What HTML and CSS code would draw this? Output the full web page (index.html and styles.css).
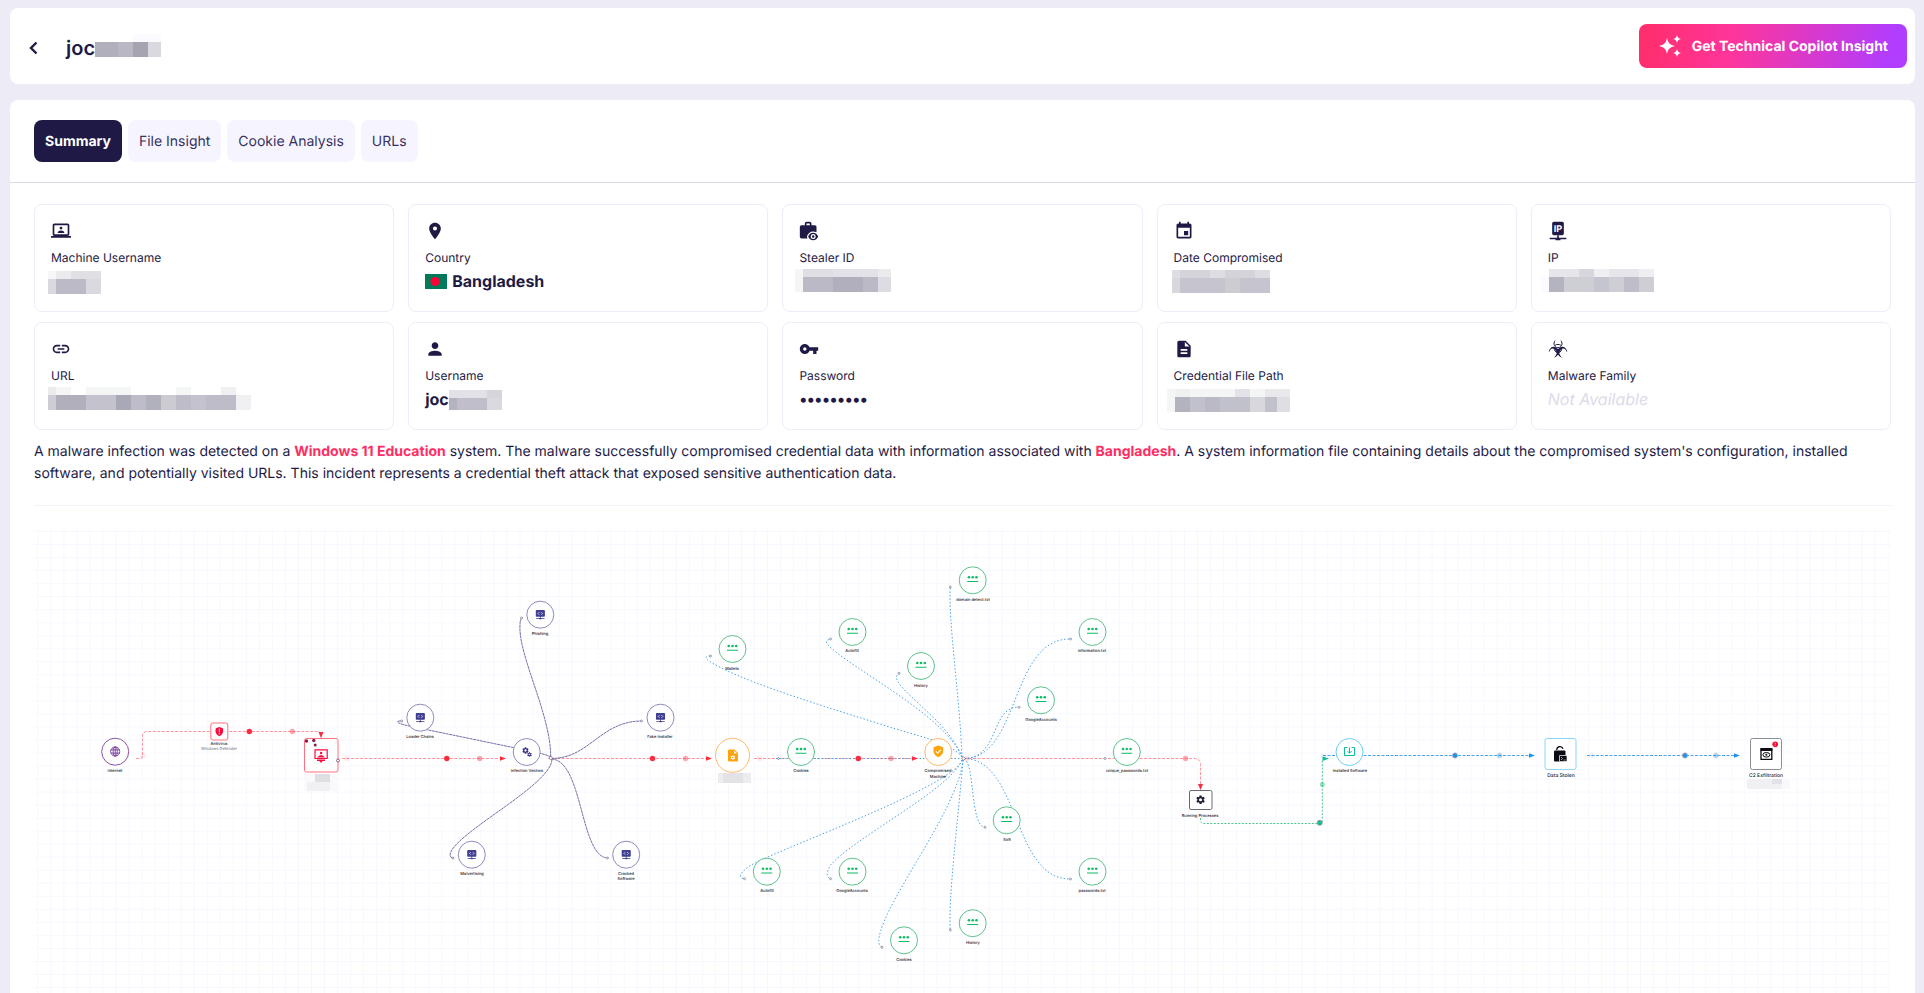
FILE: index.html
```html
<!DOCTYPE html>
<html lang="en">

<head>
  <meta charset="UTF-8">
  <meta name="viewport" content="width=device-width, initial-scale=1.0">
  <title>Technical Insight</title>
  <link rel="stylesheet" href="styles.css">
</head>

<body>

  <!-- shared icons -->
  <svg class="sprite" aria-hidden="true">
    <symbol id="i-laptop" viewBox="0 0 24 24">
      <path d="M20 18c1.1 0 2-.9 2-2V5c0-1.1-.9-2-2-2H4c-1.1 0-2 .9-2 2v11c0 1.1.9 2 2 2H0v2h24v-2zM4 5h16v11H4z" />
      <circle cx="12" cy="8.500" r="1.700" />
      <path d="M8 14.500c0-2 2-3 4-3s4 1 4 3z" />
    </symbol>
    <symbol id="i-pin" viewBox="0 0 24 24">
      <path d="M12 2C8.130 2 5 5.130 5 9c0 5.250 7 13 7 13s7-7.750 7-13c0-3.870-3.130-7-7-7zm0 9.500A2.500 2.500 0 1 1 12 6.500a2.500 2.500 0 0 1 0 5z" />
    </symbol>
    <symbol id="i-bag" viewBox="0 0 24 24">
      <path fill-rule="evenodd" d="M9 1h4a2 2 0 0 1 2 2v2h4a2 2 0 0 1 2 2v6.500c-1.200-.7-2.500-1-4-1-3.800 0-6.500 2.500-7.500 6l.6 2.500H3a2 2 0 0 1-2-2V7a2 2 0 0 1 2-2h4V3a2 2 0 0 1 2-2zm0 4h4V3H9z" />
      <path fill-rule="evenodd" d="M17 14c-2.800 0-5 1.800-6 4.500 1 2.700 3.200 4.500 6 4.500s5-1.800 6-4.500c-1-2.700-3.200-4.500-6-4.500zm0 7.500a3 3 0 1 1 0-6 3 3 0 0 1 0 6z" />
      <circle cx="17" cy="18.500" r="1.500" />
    </symbol>
    <symbol id="i-event" viewBox="0 0 24 24">
      <path d="M17 12h-5v5h5v-5zM16 1v2H8V1H6v2H5c-1.110 0-2 .9-2 2v14c0 1.100.89 2 2 2h14c1.100 0 2-.9 2-2V5c0-1.100-.9-2-2-2h-1V1h-2zm3 18H5V8h14v11z" />
    </symbol>
    <symbol id="i-link" viewBox="0 0 24 24">
      <path d="M3.900 12c0-1.710 1.390-3.100 3.100-3.100h4V7H7c-2.760 0-5 2.240-5 5s2.240 5 5 5h4v-1.900H7c-1.710 0-3.100-1.390-3.100-3.100zM8 13h8v-2H8v2zm9-6h-4v1.900h4c1.710 0 3.100 1.390 3.100 3.100s-1.390 3.100-3.100 3.100h-4V17h4c2.760 0 5-2.240 5-5s-2.240-5-5-5z" />
    </symbol>
    <symbol id="i-user" viewBox="0 0 24 24">
      <path d="M12 12c2.210 0 4-1.790 4-4s-1.790-4-4-4-4 1.790-4 4 1.790 4 4 4zm0 2c-2.670 0-8 1.340-8 4v2h16v-2c0-2.660-5.330-4-8-4z" />
    </symbol>
    <symbol id="i-key" viewBox="0 0 24 24">
      <path d="M12.650 10C11.830 7.670 9.610 6 7 6c-3.310 0-6 2.690-6 6s2.690 6 6 6c2.610 0 4.830-1.670 5.650-4H17v4h4v-4h2v-4H12.650zM7 14c-1.100 0-2-.9-2-2s.9-2 2-2 2 .9 2 2-.9 2-2 2z" />
    </symbol>
    <symbol id="i-doc" viewBox="0 0 24 24">
      <path d="M14 2H6c-1.100 0-2 .9-2 2v16c0 1.100.89 2 2 2h12c1.100 0 2-.9 2-2V8l-6-6zm2 16H8v-2h8v2zm0-4H8v-2h8v2zm-3-5V3.500L18.500 9H13z" />
    </symbol>
    <symbol id="i-bio" viewBox="0 0 24 24">
      <g fill="none" stroke="currentColor" stroke-width="1.200">
        <path d="M8.500 2C5.500 5.500 8 10.500 12 10.500S18.500 5.500 15.500 2" />
        <path d="M1.500 15C2.500 10.500 6.500 9 9.200 11s3 7.500-1.200 11" />
        <path d="M22.500 15c-1-4.500-5-6-7.700-4s-3 7.500 1.200 11" />
        <path d="M7.500 9.500C7 13.500 9 16.500 12 16.500s5-3 4.500-7" />
        <path d="M8.500 7.500c2-1.300 5-1.300 7 0" />
      </g>
      <path d="M2 13c2-4 5.500-4.500 7.500-2.500L12 12l2.500-1.500C16.500 8.500 20 9 22 13c-2.500-2.500-5.500-2-7 .5L13 17l2 5-3-3-3 3 2-5-2-3.500c-1.500-2.500-4.500-3-7-.5z" />
    </symbol>
    <symbol id="i-globe" viewBox="0 0 24 24">
      <g fill="none" stroke="currentColor" stroke-width="1.800">
        <circle cx="12" cy="12" r="10" />
        <ellipse cx="12" cy="12" rx="4.500" ry="10" />
        <path d="M2.500 8.500h19M2.500 15.500h19M12 2v20" />
      </g>
    </symbol>
    <symbol id="i-screen" viewBox="0 0 24 24">
      <path d="M3 1h18a2 2 0 0 1 2 2v12a2 2 0 0 1-2 2h-8v3h9v2h-7v1H9v-1H2v-2h9v-3H3a2 2 0 0 1-2-2V3a2 2 0 0 1 2-2z" />
      <path d="M9.500 6L6.500 9l3 3M14.500 6l3 3-3 3" fill="none" stroke="#fff" stroke-width="1.800" />
    </symbol>
    <symbol id="i-dots" viewBox="0 0 24 24">
      <circle cx="4.500" cy="8" r="2.600" />
      <circle cx="12" cy="8" r="2.600" />
      <circle cx="19.500" cy="8" r="2.600" />
      <path d="M1 15.500h22v2H1z" />
    </symbol>
    <symbol id="i-gear" viewBox="0 0 24 24">
      <path fill-rule="evenodd" d="M9.500 1h5l.6 3.300 1.900 1.100L20.200 4.200l2.500 4.300-2.600 2.200v2.600l2.600 2.200-2.500 4.300-3.200-1.200-1.900 1.100-.6 3.300h-5l-.6-3.300L7 18.600l-3.200 1.200-2.500-4.300 2.600-2.200v-2.600L1.300 8.500l2.500-4.300L7 5.400l1.900-1.100zM12 8a4 4 0 1 0 0 8 4 4 0 0 0 0-8z" />
    </symbol>
    <!-- small node with three dots used for every stolen file -->
    <symbol id="file-node" viewBox="-14 -14 28 28" overflow="visible">
      <circle r="13.500" fill="#fff" stroke="#5cc28b" />
      <use href="#i-dots" x="-6" y="-7" width="12" height="12" fill="#0dbd66" />
    </symbol>
    <symbol id="vector-node" viewBox="-14 -14 28 28" overflow="visible">
      <circle r="13.500" fill="#fff" stroke="#8f8bbd" />
      <use href="#i-screen" x="-5" y="-5" width="10" height="10" fill="#413f91" />
    </symbol>
  </svg>

  <header class="topbar">
    <button class="back" type="button" aria-label="Back">
      <svg width="12" height="16" viewBox="0 0 12 16"><path d="M9.500 2.500L4 8l5.500 5.500" fill="none" stroke="currentColor" stroke-width="2.400" /></svg>
    </button>
    <h1>joc<svg class="redact" width="67" height="23" viewBox="0 0 67 23" aria-hidden="true">
        <path fill="#fafaff" d="M38 0h28v8H38z" />
        <path fill="#b2afbd" d="M0 8h23v15H0z" />
        <path fill="#bab7c5" d="M23 8h15v15H23z" />
        <path fill="#a5a4b0" d="M38 8h15v15H38z" />
        <path fill="#d9d9df" d="M53 8h13v15H53z" />
      </svg></h1>
    <button class="copilot" type="button">
      <svg width="24" height="24" viewBox="0 0 24 24" fill="currentColor">
        <path d="M9 4c1 5 3 7 8 8-5 1-7 3-8 8-1-5-3-7-8-8 5-1 7-3 8-8z" />
        <path d="M19 1c.5 2.500 1.500 3.500 4 4-2.500.5-3.500 1.500-4 4-.5-2.500-1.500-3.500-4-4 2.500-.5 3.500-1.500 4-4zM19 15c.5 2.500 1.500 3.500 4 4-2.500.5-3.500 1.500-4 4-.5-2.500-1.500-3.500-4-4 2.500-.5 3.500-1.500 4-4z" />
      </svg>
      Get Technical Copilot Insight
    </button>
  </header>

  <main class="panel">
    <nav class="tabs">
      <button class="tab active" type="button">Summary</button>
      <button class="tab" type="button">File Insight</button>
      <button class="tab" type="button">Cookie Analysis</button>
      <button class="tab" type="button">URLs</button>
    </nav>

    <div class="content">
      <section class="cards">
        <div class="card">
          <svg class="icon"><use href="#i-laptop" /></svg>
          <div class="label">Machine Username</div>
          <div class="value">
            <svg class="mask" width="80" height="26" aria-hidden="true">
              <path fill="#f7f7f9" d="M5 3h8v8H5z" /><path fill="#ebebee" d="M13 3h15v8H13z" /><path fill="#dfdfe4" d="M28 3h30v8H28z" />
              <path fill="#d9d9df" d="M5 11h8v15H5zM43 11h15v15H43z" /><path fill="#bcbac6" d="M13 11h30v15H13z" />
            </svg>
          </div>
        </div>
        <div class="card">
          <svg class="icon"><use href="#i-pin" /></svg>
          <div class="label">Country</div>
          <div class="value">
            <svg class="flag" width="22" height="15" aria-hidden="true"><path fill="#007a5a" d="M0 0h22v15H0z" /><circle cx="10" cy="7.500" r="4.600" fill="#ff0037" /></svg>
            Bangladesh
          </div>
        </div>
        <div class="card">
          <svg class="icon"><use href="#i-bag" /></svg>
          <div class="label">Stealer ID</div>
          <div class="value">
            <svg class="mask" width="110" height="26" aria-hidden="true">
              <path fill="#f4f6f6" d="M4 1h8v23H4z" /><path fill="#dfdee3" d="M12 1h30v8H12z" /><path fill="#e3e2e8" d="M42 1h45v8H42z" /><path fill="#ebebed" d="M87 1h13v8H87z" />
              <path fill="#bbb9c5" d="M12 9h75v15H12z" /><path fill="#b1afbd" d="M42 9h30v15H42z" /><path fill="#dddce2" d="M87 9h13v15H87z" />
            </svg>
          </div>
        </div>
        <div class="card">
          <svg class="icon"><use href="#i-event" /></svg>
          <div class="label">Date Compromised</div>
          <div class="value">
            <svg class="mask" width="110" height="26" aria-hidden="true">
              <path fill="#dedde3" d="M6 2h98v8H6z" /><path fill="#d4d3d9" d="M14 2h30v8H14zM59 2h30v8H59z" />
              <path fill="#d7d7dc" d="M6 10h8v15H6z" /><path fill="#c5c4cf" d="M14 10h90v15H14z" /><path fill="#ccccd1" d="M59 10h15v15H59z" />
            </svg>
          </div>
        </div>
        <div class="card">
          <svg class="icon" viewBox="0 0 24 24">
            <rect x="5" y="1" width="14" height="16" rx="2" />
            <path d="M11 17h2v3h9v2h-7v1H9v-1H2v-2h9z" />
            <text class="ip-text" x="12" y="13" text-anchor="middle">IP</text>
          </svg>
          <div class="label">IP</div>
          <div class="value">
            <svg class="mask" width="120" height="26" aria-hidden="true">
              <path fill="#fafaff" d="M1 9h8v15H1z" /><path fill="#e6e6ea" d="M9 1h105v8H9z" /><path fill="#d7d6dc" d="M39 1h15v8H39z" /><path fill="#efeff1" d="M54 1h15v8H54zM99 1h15v8H99z" />
              <path fill="#cecfd5" d="M9 9h105v15H9z" /><path fill="#b4b4c0" d="M9 9h15v15H9z" /><path fill="#c5c5d0" d="M54 9h15v15H54z" /><path fill="#bfbdc9" d="M84 9h15v15H84z" />
            </svg>
          </div>
        </div>
        <div class="card">
          <svg class="icon"><use href="#i-link" /></svg>
          <div class="label">URL</div>
          <div class="value">
            <svg class="mask" width="212" height="26" aria-hidden="true">
              <path fill="#ebebee" d="M5 1h8v8H5z" /><path fill="#f4f6f6" d="M13 1h15v8H13zM43 1h45v8H43zM133 1h15v8H133z" /><path fill="#f0f0f3" d="M178 1h15v8H178z" />
              <path fill="#cecdd5" d="M5 9h8v15H5z" /><path fill="#b1afbc" d="M13 9h30v15H13z" /><path fill="#c3c2cd" d="M43 9h30v15H43zM148 9h15v15H148z" /><path fill="#a9a8b6" d="M73 9h15v15H73z" />
              <path fill="#bdbcc8" d="M88 9h15v15H88zM133 9h15v15H133zM163 9h30v15H163z" /><path fill="#b1b0bd" d="M103 9h15v15H103z" /><path fill="#cccbd1" d="M118 9h15v15H118z" /><path fill="#f0f0f3" d="M193 9h15v15H193z" />
            </svg>
          </div>
        </div>
        <div class="card">
          <svg class="icon"><use href="#i-user" /></svg>
          <div class="label">Username</div>
          <div class="value">joc<svg width="54" height="26" aria-hidden="true">
              <path fill="#e2e1e8" d="M0 4h38v8H0z" /><path fill="#d6d5dc" d="M38 4h15v8H38z" />
              <path fill="#b3b2be" d="M0 12h8v12H0z" /><path fill="#bfbeca" d="M8 12h30v12H8z" /><path fill="#d9d9df" d="M38 12h15v12H38z" />
            </svg></div>
        </div>
        <div class="card">
          <svg class="icon"><use href="#i-key" /></svg>
          <div class="label">Password</div>
          <div class="value">•••••••••</div>
        </div>
        <div class="card">
          <svg class="icon"><use href="#i-doc" /></svg>
          <div class="label">Credential File Path</div>
          <div class="value">
            <svg class="mask" width="130" height="26" aria-hidden="true">
              <path fill="#f4f6f6" d="M1 3h8v23H1zM24 3h90v8H24z" /><path fill="#f0f0f3" d="M9 3h15v8H9z" /><path fill="#e2e2e8" d="M69 3h15v8H69z" /><path fill="#e9e9ec" d="M99 3h25v8H99z" />
              <path fill="#c1c1cb" d="M9 11h102v15H9z" /><path fill="#b3b3bf" d="M9 11h15v15H9z" /><path fill="#bbb9c6" d="M39 11h15v15H39z" /><path fill="#d8d7dd" d="M84 11h15v15H84z" /><path fill="#dedee3" d="M111 11h13v15H111z" />
            </svg>
          </div>
        </div>
        <div class="card">
          <svg class="icon"><use href="#i-bio" /></svg>
          <div class="label">Malware Family</div>
          <div class="value empty">Not Available</div>
        </div>
      </section>

      <p class="summary">A malware infection was detected on a <strong>Windows 11 Education</strong> system. The malware
        successfully compromised credential data with information associated with <strong>Bangladesh</strong>. A system
        information file containing details about the compromised system's configuration, installed software, and
        potentially visited URLs. This incident represents a credential theft attack that exposed sensitive
        authentication data.</p>

      <!-- attack flow -->
      <svg class="flow" viewBox="34 529 1857 464" role="img" aria-label="Attack flow">
        <defs>
          <pattern id="grid" x="37.400" y="531" width="13.030" height="13.030" patternUnits="userSpaceOnUse">
            <path d="M.5 0v13.030M0 .5h13.030" stroke="#f7f8ff" fill="none" />
          </pattern>
        </defs>
        <rect x="34" y="529" width="1857" height="464" fill="url(#grid)" />

        <g class="edge red">
          <path d="M136 758.500h4q2.500 0 2.500-3v-19q0-5 5-5H318q3 0 3 3v3" />
          <path d="M342 758.500H502M548 758.500H708M754 758.500H914M964 758.500H1194q6.500 0 6.500 6v20" />
        </g>
        <g class="edge purple">
          <path d="M550.700 757C551 715 518 655 520 625q0-7 3-7" />
          <path d="M551 757C545 754 540 753.500 530 751L409 726C400 724 395 722 399 721h4" />
          <path d="M551 758.500C590 758.500 600 721 642 721" />
          <path d="M552 759C552 784 462 829 450.700 852q-2 6 3 6" />
          <path d="M551 759C583 759 580 858 608 858" />
        </g>
        <g class="edge blue dotted">
          <path d="M776 758.500H964" />
          <path d="M962 757C960 700 948 620 950.300 587" />
          <path d="M962 757C950 742 920 737 880 724 800 699 735 678 709 661q-7-5 2-5" />
          <path d="M962 757C945 715 850 668 828 645q-4-5 3-6" />
          <path d="M962 757C950 725 910 700 898 682q-4-7 2-8.500" />
          <path d="M964 758.500C1020 758.500 1010 639 1070 639" />
          <path d="M964 758.500C1000 758 990 707 1019 707" />
          <path d="M964 759C975 762 970 827 985 827" />
          <path d="M964 758.500C1020 759 1012 879 1070 879" />
          <path d="M962 760C955 785 790 845 755 863 740 871 737 878 744 878.500" />
          <path d="M962 760C950 790 850 840 830 866q-6 11 1 12.500" />
          <path d="M963 760C958 810 885 900 879 938q-1 9 4 9" />
          <path d="M963 760C958 820 948 900 950.300 930" />
        </g>
        <g class="edge blue">
          <path d="M1323 755.500H1530M1587 755.500H1736" />
        </g>
        <g class="edge green">
          <path d="M1200.500 818v2q0 3.500 3 3.500H1319q3.300 0 3.300-3V762q0-3 3-3" />
        </g>

        <!-- arrow heads -->
        <g fill="#ff2a40">
          <path d="M318.500 732h5l-2.500 6zM500 756.200l6 2.300-6 2.300zM706 756.200l6 2.300-6 2.300zM912 756.200l6 2.300-6 2.300zM1198 784h5l-2.500 6z" />
        </g>
        <path fill="#0dbd98" d="M1322.500 756.500l6.500 2-6.500 2.500z" />
        <path fill="#1c94ea" d="M1529 753.200l6 2.300-6 2.300zM1734 753.200l6 2.300-6 2.300z" />

        <!-- moving dots -->
        <g fill="#ff2a40">
          <circle cx="249.300" cy="731.500" r="2.700" />
          <circle cx="446.800" cy="758.500" r="2.700" />
          <circle cx="652.500" cy="758.500" r="2.700" />
          <circle cx="858.300" cy="758.500" r="2.700" />
          <g opacity=".4">
            <circle cx="292.300" cy="731.500" r="2.700" />
            <circle cx="479.700" cy="758.500" r="2.700" />
            <circle cx="685.500" cy="758.500" r="2.700" />
            <circle cx="891" cy="758.500" r="2.700" />
            <circle cx="1185.500" cy="758.500" r="2.700" />
          </g>
          <g opacity=".1">
            <circle cx="143" cy="756" r="2.700" />
            <circle cx="347" cy="758.500" r="2.700" />
            <circle cx="759.500" cy="758.500" r="2.700" />
            <circle cx="967" cy="758.500" r="2.700" />
          </g>
        </g>
        <g fill="#1c94ea" stroke="#ffb3b3" stroke-width=".6">
          <circle cx="1455" cy="755.500" r="2.700" />
          <circle cx="1685" cy="755.500" r="2.700" />
          <g opacity=".4">
            <circle cx="1499.500" cy="755.500" r="2.700" />
            <circle cx="1716" cy="755.500" r="2.700" />
          </g>
          <g opacity=".1">
            <circle cx="1323" cy="756" r="2.700" />
            <circle cx="1592" cy="755.500" r="2.700" />
          </g>
        </g>
        <circle cx="1319.700" cy="822.800" r="2.700" fill="#0dbd98" stroke="#ff8a8a" stroke-width=".5" />
        <circle cx="1322.300" cy="784.500" r="2.500" fill="#0dbd66" opacity=".45" />

        <!-- handles -->
        <g class="handles">
          <circle cx="521.500" cy="618" r="1" /><circle cx="401.500" cy="721" r="1" /><circle cx="641.500" cy="721" r="1" />
          <circle cx="453" cy="858" r="1" /><circle cx="607.500" cy="858" r="1" /><circle cx="550.800" cy="758" r="1.600" />
          <circle cx="710.500" cy="656" r="1" /><circle cx="830.500" cy="639" r="1" /><circle cx="899" cy="673.300" r="1" />
          <circle cx="950.300" cy="587" r="1" /><circle cx="1070.500" cy="639" r="1" /><circle cx="1019" cy="707.300" r="1" />
          <circle cx="985" cy="827.300" r="1" /><circle cx="1070.500" cy="879" r="1" /><circle cx="744.500" cy="878.700" r="1" />
          <circle cx="830.500" cy="878.700" r="1" /><circle cx="882" cy="947.300" r="1" /><circle cx="950.300" cy="930" r="1" />
          <circle cx="778.500" cy="758.500" r="1" /><circle cx="1105" cy="758.500" r="1" /><circle cx="963.500" cy="758.500" r="1.600" />
        </g>

        <!-- entry nodes -->
        <circle cx="115.200" cy="751.700" r="13.500" fill="#fff" stroke="#8a55a8" />
        <use href="#i-globe" x="109.700" y="746" width="11" height="11" color="#6b2a94" />
        <rect x="210.800" y="723" width="17" height="17" rx="2" fill="#fff" stroke="#ff7080" />
        <path fill="#ff0a3c" d="M219.300 727l3.500 1.300c.8 3.500.3 6-3.500 8-3.800-2-4.300-4.500-3.500-8z" />
        <path stroke="#fff" stroke-width=".8" d="M219.300 728.500v3.800M219.300 733.200v1.200" />
        <rect x="304.500" y="738.500" width="33.500" height="33.500" rx="2" fill="#fff" stroke="#ff7080" />
        <path fill="none" stroke="#ff0a3c" stroke-width="1.200" d="M315 749.800h12.200v8.700H315z" />
        <path fill="#ff0a3c" d="M317 757.500q4-5 8 0zM317 759.500h8v1.500h-2.500l-1.500 2-1.500-2H317z" />
        <circle cx="321.100" cy="753" r="1.300" fill="#ff0a3c" />
        <g fill="#7d2148">
          <circle cx="306.500" cy="741" r="1.700" /><circle cx="313.800" cy="740.500" r="1.700" /><circle cx="315.200" cy="745" r="1.500" />
        </g>
        <circle cx="338" cy="760.500" r="1.500" fill="#fff" stroke="#6b2a64" stroke-width=".7" />
        <circle cx="336" cy="742.500" r="1.300" fill="#eee" />
        <path fill="#fafafc" d="M304 774h35v17h-35z" />
        <path fill="#dedee3" d="M315 774h15v8h-15z" />
        <path fill="#f1f1f4" d="M307 782h23v9h-23z" />

        <!-- infection vectors -->
        <circle cx="526.700" cy="752" r="13.500" fill="#fff" stroke="#8f8bbd" />
        <use href="#i-gear" x="522" y="747" width="7" height="7" fill="#312e81" />
        <use href="#i-gear" x="527" y="752" width="5" height="5" fill="#312e81" />
        <use href="#vector-node" x="526.300" y="600.700" width="28" height="28" />
        <use href="#vector-node" x="406.300" y="703.700" width="28" height="28" />
        <use href="#vector-node" x="646.500" y="703.700" width="28" height="28" />
        <use href="#vector-node" x="457.800" y="840.700" width="28" height="28" />
        <use href="#vector-node" x="612.200" y="840.700" width="28" height="28" />

        <!-- malware file -->
        <circle cx="732.500" cy="755.300" r="17" fill="#fff" stroke="#ffb968" />
        <path fill="#ffa30c" d="M729 749.500h5.500l3.500 3.500v7.500q0 1-1 1h-8q-1 0-1-1v-10q0-1 1-1z" />
        <path fill="#fff" d="M734 750.500v3h3z" />
        <use href="#i-gear" x="730.300" y="755" width="5" height="5" fill="#fff" />
        <path fill="#ededf0" d="M718 773h33v10h-33z" />
        <path fill="#e3e3e7" d="M723 773h20v10h-20z" />

        <!-- compromised machine -->
        <circle cx="938.300" cy="752" r="13.500" fill="#fff" stroke="#ffb968" />
        <path fill="#ffa30c" d="M938.300 745.500l4.800 1.800v4q0 3.700-4.800 5.900-4.800-2.200-4.800-5.900v-4z" />
        <path fill="none" stroke="#fff" stroke-width="1.100" d="M935.900 751.300l1.800 1.800 3.200-3.400" />

        <!-- stolen files -->
        <use href="#file-node" x="787" y="738" width="28" height="28" />
        <use href="#file-node" x="718.500" y="635" width="28" height="28" />
        <use href="#file-node" x="838.500" y="618" width="28" height="28" />
        <use href="#file-node" x="907" y="652" width="28" height="28" />
        <use href="#file-node" x="958.700" y="566.300" width="28" height="28" />
        <use href="#file-node" x="1078.500" y="618" width="28" height="28" />
        <use href="#file-node" x="1027" y="686.300" width="28" height="28" />
        <use href="#file-node" x="1112.800" y="738" width="28" height="28" />
        <use href="#file-node" x="992.700" y="806.300" width="28" height="28" />
        <use href="#file-node" x="1078.500" y="857.700" width="28" height="28" />
        <use href="#file-node" x="752.800" y="857.700" width="28" height="28" />
        <use href="#file-node" x="838.500" y="857.700" width="28" height="28" />
        <use href="#file-node" x="890" y="926.300" width="28" height="28" />
        <use href="#file-node" x="958.700" y="909.200" width="28" height="28" />

        <!-- exfiltration -->
        <rect x="1189.500" y="790.500" width="22.500" height="19" rx="1.500" fill="#fff" stroke="#6b6b78" />
        <use href="#i-gear" x="1195.800" y="795" width="9.500" height="9.500" fill="#1f2030" />
        <circle cx="1349.500" cy="752" r="13.500" fill="#fff" stroke="#6fcdf5" />
        <path fill="none" stroke="#0dbd98" d="M1347.500 747.500h-3v8h10v-8h-3M1349.500 747.500v5.500M1347.300 751l2.200 2.200 2.200-2.200" />
        <rect x="1545" y="738.500" width="31" height="31" rx="2" fill="#fff" stroke="#8ad7f7" />
        <path fill="#0a0a12" d="M1555 750.500h9.500q1 0 1 1v9q0 1-1 1H1555q-1 0-1-1v-9q0-1 1-1z" />
        <path fill="none" stroke="#0a0a12" stroke-width="1.300" d="M1556.800 750v-.5a3.200 3.200 0 0 1 6.200-.8" />
        <path fill="#0a0a12" stroke="#fff" stroke-width=".7" d="M1559.500 755.500h7.500v6h-7.500z" />
        <path fill="none" stroke="#fff" stroke-width=".6" d="M1561 757l1.500 1.500-1.500 1.500M1563.500 760h2" />
        <rect x="1750.500" y="738.500" width="31" height="31" rx="2" fill="#fff" stroke="#8d8d95" />
        <path fill="none" stroke="#0a0a12" stroke-width="1.300" d="M1761 748.800h10.800v10.500H1761z" />
        <path fill="#0a0a12" d="M1760.500 748h11.800v3h-11.800z" />
        <ellipse cx="1766.400" cy="754.800" rx="3.500" ry="2.300" fill="none" stroke="#0a0a12" />
        <circle cx="1766.400" cy="754.800" r="1" fill="#0a0a12" />
        <circle cx="1775.200" cy="744.200" r="2.800" fill="#ff0a2f" />
        <path stroke="#fff" stroke-width=".7" d="M1775.200 742.700v1.800M1775.200 745.100v.7" />
        <path fill="#f0f0f3" d="M1747 779h35v10h-35z" />
        <path fill="#f9f9fb" d="M1782 779h8v10h-8z" />
        <path fill="#e2e2e8" d="M1772 779h10v5h-10z" />

        <g class="names">
          <text x="115" y="772">Internet</text>
          <text x="219" y="745">Antivirus</text>
          <text class="sub" x="219" y="750">Windows Defender</text>
          <text x="527" y="772">Infection Vectors</text>
          <text x="540" y="635">Phishing</text>
          <text x="420" y="738">Loader Chains</text>
          <text x="660" y="738">Fake Installer</text>
          <text x="472" y="875">Malvertising</text>
          <text x="626" y="875">Cracked</text>
          <text x="626" y="880">Software</text>
          <text x="801" y="772">Cookies</text>
          <text x="732" y="670">Wallets</text>
          <text x="852" y="652">Autofill</text>
          <text x="921" y="687">History</text>
          <text x="973" y="601">domain detect.txt</text>
          <text x="1092" y="652">information.txt</text>
          <text x="1041" y="721">GoogleAccounts</text>
          <text x="938" y="772">Compromised</text>
          <text x="938" y="778">Machine</text>
          <text x="1127" y="772">unique_passwords.txt</text>
          <text x="1007" y="841">Soft</text>
          <text x="1092" y="892">passwords.txt</text>
          <text x="767" y="892">Autofill</text>
          <text x="852" y="892">GoogleAccounts</text>
          <text x="904" y="961">Cookies</text>
          <text x="973" y="944">History</text>
          <text x="1200" y="817">Running Processes</text>
          <text x="1350" y="772">Installed Software</text>
          <text class="big" x="1561" y="777">Data Stolen</text>
          <text class="big" x="1766" y="777">C2 Exfiltration</text>
        </g>
      </svg>
    </div>
  </main>

</body>

</html>
```
FILE: styles.css
```css
* {
  padding: 0;
  margin: 0;
  box-sizing: border-box;
}

body {
  display: flex;
  flex-direction: column;
  gap: 16px;
  min-height: 100vh;
  padding: 8px 9px 0 10px;
  background-color: #ecebf6;
  color: #1e1a45;
  font-family: Inter, "Liberation Sans", sans-serif;
  text-rendering: geometricPrecision;
}

button {
  border: none;
  background: none;
  font: inherit;
  color: inherit;
  text-rendering: inherit;
  cursor: pointer;
}

svg {
  display: block;
  flex-shrink: 0;
}

.sprite {
  position: absolute;
  width: 0;
  height: 0;
}

/* top bar */
.topbar {
  display: flex;
  align-items: center;
  height: 76px;
  padding: 0 8px 0 17px;
  border-radius: 8px;
  background-color: #fff;
}

.back {
  display: flex;
  margin: 3px 27px 0 0;
}

.topbar h1 {
  display: flex;
  align-items: center;
  margin-top: 3px;
  line-height: 24px;
  font-size: 20px;
  font-weight: 600;
}

.redact {
  margin-bottom: 4px;
}

.copilot {
  display: flex;
  align-items: center;
  gap: 10px;
  height: 44px;
  margin-left: auto;
  padding: 0 19px;
  border-radius: 8px;
  background: linear-gradient(100deg, #ff2d69 0%, #ff359a 34%, #b03dff 94%);
  color: #fff;
  font-size: 14px;
  font-weight: 700;
}

/* panel */
.panel {
  flex: 1;
  border-radius: 8px 8px 0 0;
  background-color: #fff;
}

.tabs {
  display: flex;
  gap: 6px;
  padding: 20px 24px;
  border-bottom: 1px solid #d9d7e6;
}

.tab {
  height: 42px;
  padding: 0 11px;
  border-radius: 8px;
  background-color: #f6f5ff;
  font-size: 14px;
  color: #37325e;
}

.tab.active {
  background-color: #1e1a45;
  color: #fff;
  font-weight: 700;
}

.content {
  padding: 21px 24px 0;
}

/* detail cards */
.cards {
  display: grid;
  grid-template-columns: repeat(5, 1fr);
  gap: 10px 14px;
}

.card {
  padding: 16px 16px 17px;
  border: 1px solid #eeecfa;
  border-radius: 8px;
}

.icon {
  width: 20px;
  height: 20px;
  fill: currentColor;
}

.ip-text {
  fill: #fff;
  font-size: 11px;
  font-weight: 700;
}

.label {
  margin-top: 8px;
  line-height: 18px;
  font-size: 12px;
}

.value {
  display: flex;
  align-items: center;
  height: 26px;
  margin-top: 1px;
  font-size: 16px;
  font-weight: 700;
}

.value.empty {
  color: #dddaea;
  font-style: italic;
  font-weight: 400;
}

.mask {
  margin-left: -8px;
}

.flag {
  margin-right: 5px;
}

.summary {
  margin-top: 11px;
  padding-bottom: 20px;
  border-bottom: 1px solid #f3f2fb;
  line-height: 22px;
  font-size: 14px;
}

.summary strong {
  color: #ff2d63;
}

/* attack flow */
.flow {
  width: 100%;
  margin-top: 23px;
}

.edge {
  fill: none;
  stroke-width: 1px;
}

.edge.red {
  stroke: #ff949e;
  stroke-dasharray: 3 1.5;
}

.edge.purple {
  stroke: #7470ab;
  stroke-dasharray: 3 .5;
}

.edge.blue {
  stroke: #4aa3ec;
  stroke-dasharray: 3 1.5;
}

.edge.blue.dotted {
  stroke: #4aa3ec;
  stroke-dasharray: 1.5 2;
}

.edge.green {
  stroke: #4cc48f;
  stroke-dasharray: 2 1.5;
}

.handles {
  fill: #fff;
  stroke: #77778c;
  stroke-width: .7px;
}

.names text {
  font-size: 4px;
  font-weight: 500;
  fill: #1c1c2e;
  text-anchor: middle;
}

.names .sub {
  fill: #6c6c7c;
  font-weight: 400;
}

.names .big {
  font-size: 5px;
}
```
